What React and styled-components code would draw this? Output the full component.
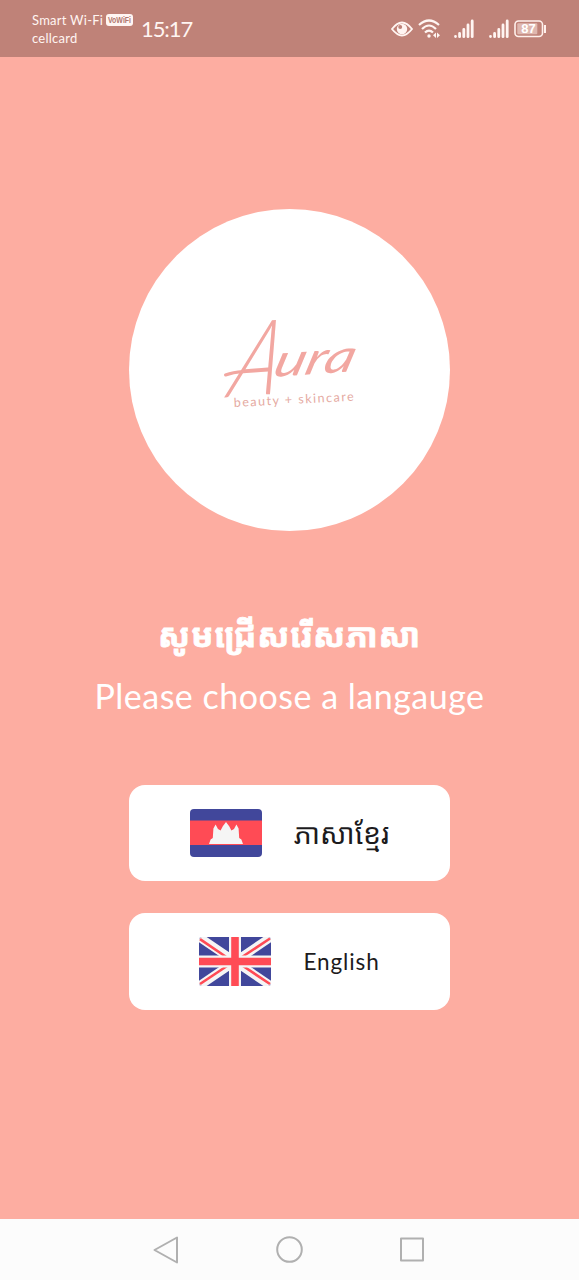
import React from "react";
import styled, { createGlobalStyle } from "styled-components";

const GlobalStyle = createGlobalStyle`
  * { box-sizing: border-box; }
  body { margin: 0; background: #fdada1; }
  button { font: inherit; border: 0; padding: 0; }
`;

const Screen = styled.div`
  width: 579px;
  height: 1280px;
  display: flex;
  flex-direction: column;
  background: #fdada1;
  font-family: Lato, "Noto Sans", "Noto Sans Khmer", "Khmer OS", sans-serif;
  overflow: hidden;
`;

const StatusBar = styled.header`
  height: 57px;
  flex: none;
  display: flex;
  align-items: center;
  padding: 0 32px;
  background: #bf8278;
  color: #fff5f2;
`;

const Carrier = styled.div`
  display: flex;
  flex-direction: column;
  width: 109px;
  font-size: 13px;
  line-height: 18px;
  padding-top: 1px;
  white-space: nowrap;
`;

const CarrierLine = styled.div`
  display: flex;
  align-items: center;
  gap: 3px;
  letter-spacing: ${(p) => p.$spacing || 0}px;
`;

const VoBadgeIcon = styled.svg`
  display: block;
  overflow: visible;
`;

const Clock = styled.div`
  font-size: 22px;
  line-height: 26px;
  letter-spacing: -1.1px;
  padding-top: 1px;
`;

const StatusIcons = styled.div`
  display: flex;
  align-items: center;
  margin-left: auto;
  svg { display: block; }
`;

const SignalGroup = styled.div`
  display: flex;
  gap: 15px;
  margin: 0 5px 0 13px;
`;

const Content = styled.main`
  flex: 1;
  display: flex;
  flex-direction: column;
  align-items: center;
  padding-top: 152px;
`;

const LogoDisc = styled.div`
  width: 321px;
  height: 322px;
  flex: none;
  border-radius: 50%;
  background: #fff;
  display: flex;
  align-items: center;
  justify-content: center;
`;

const KhmerTitle = styled.h1`
  margin: 75px 0 0;
  height: 56px;
  color: #fff;
  font-size: 33px;
  font-weight: 700;
  line-height: 56px;
  letter-spacing: 0.8px;
  -webkit-text-stroke: 0.8px #fff;
  white-space: nowrap;
`;

const Subtitle = styled.p`
  margin: 9px 0 0;
  height: 50px;
  color: #fff;
  font-size: 34px;
  line-height: 50px;
  letter-spacing: 0.5px;
  white-space: nowrap;
`;

const Choices = styled.div`
  display: flex;
  flex-direction: column;
  gap: 32px;
  margin-top: 64px;
`;

const ChoiceButton = styled.button`
  width: 321px;
  height: ${(p) => p.$height}px;
  display: flex;
  align-items: center;
  justify-content: center;
  gap: 32px;
  border-radius: 16px;
  background: #fff;
  color: #1c1b1d;
  svg { display: block; flex: none; }
`;

const ChoiceLabel = styled.span`
  font-size: ${(p) => p.$size}px;
  line-height: 36px;
  letter-spacing: ${(p) => p.$spacing || 0}px;
  white-space: nowrap;
`;

const NavBar = styled.nav`
  height: 61px;
  flex: none;
  display: flex;
  align-items: center;
  justify-content: center;
  gap: 95px;
  background: #fcfcfc;
  svg { display: block; }
`;

function Logo() {
  return (
    <svg width="220" height="200" viewBox="180 270 220 200" fill="#f2a7a1">
      <g transform="translate(228 393) rotate(-4) skewX(-19)" fontFamily="Lato, sans-serif" fontStyle="italic">
        <text x="-1" y="4" fontSize="104" fontWeight="300" textLength="48" lengthAdjust="spacingAndGlyphs">A</text>
        <text x="40" y="-13" fontSize="45" textLength="81" lengthAdjust="spacingAndGlyphs">ura</text>
      </g>
      <path d="M225.5 375Q233 372 243 371.4" fill="none" stroke="#f2a7a1" strokeWidth="3" strokeLinecap="round" />
      <text transform="translate(234 407) rotate(-3)" fontFamily="Lato, sans-serif" fontSize="12.5" fill="#e5aaa2" textLength="120">
        beauty + skincare
      </text>
    </svg>
  );
}

function VoBadge() {
  return (
    <VoBadgeIcon width="27" height="12" viewBox="0 0 27 12">
      <rect width="27" height="12" rx="3" fill="#fff5f2" />
      <text x="2" y="9.3" fill="#b0776e" fontFamily="Liberation Sans, sans-serif" fontSize="9.5" fontWeight="700" letterSpacing="0" textLength="23" lengthAdjust="spacingAndGlyphs">VoWiFi</text>
    </VoBadgeIcon>
  );
}

function EyeIcon() {
  return (
    <svg width="22" height="18" viewBox="0 0 22 18" fill="none">
      <path d="M1 9Q11-4 21 9Q11 22 1 9Z" stroke="#fff5f2" strokeWidth="1.8" />
      <circle cx="11" cy="9" r="5.2" fill="#fff5f2" />
      <circle cx="9.2" cy="7" r="2" fill="#bf8278" />
    </svg>
  );
}

function WifiIcon() {
  return (
    <svg width="28" height="20" viewBox="-5 0 28 20" fill="none" stroke="#fff5f2" strokeWidth="2.2">
      <path d="M1 6Q11-3 21 6M4 10Q11 3 18 10M7 13.5Q11 9.5 15 13.5" />
      <circle cx="11" cy="17" r="1.7" fill="#fff5f2" stroke="none" />
      <path d="M18 13.5l-3 2.7 3 2.7zM19 13.5l3 2.7-3 2.7z" fill="#fff5f2" stroke="none" />
    </svg>
  );
}

function SignalIcon() {
  return (
    <svg width="20" height="20" viewBox="0 0 20 20" stroke="#fff5f2" strokeWidth="2.8" strokeLinecap="round">
      <path d="M1.5 17.5v.1M5.6 14.5v3.2M9.8 10.5v7.2M14 6v11.7M18.2 2v15.7" />
    </svg>
  );
}

function BatteryIcon() {
  return (
    <svg width="33" height="20" viewBox="0 0 33 20">
      <rect x="1" y="2" width="27.5" height="15.5" rx="3.5" fill="none" stroke="#fff0ec" strokeWidth="1.6" />
      <rect x="3.3" y="4.2" width="20" height="11" rx="1" fill="#dfb7af" />
      <path d="M31 6v8" stroke="#fff0ec" strokeWidth="2" />
      <text x="14.5" y="14.4" fill="#fff" fontFamily="Liberation Sans, sans-serif" fontSize="13" fontWeight="700" textAnchor="middle">87</text>
    </svg>
  );
}

function CambodiaFlag() {
  return (
    <svg width="72" height="48" viewBox="0 0 72 48">
      <rect width="72" height="48" rx="4" fill="#41479b" />
      <path d="M0 11.5h72v24.5H0z" fill="#ff4b55" />
      <path d="M19 35l1.6-4.5 2.2-1.5.6-9.5 2.2-4 2.4 4.5 2.6 1.5 2.2-4.3L36 13l3.2 4.2 2.2 4.3L44 20l2.4-4.5 2.2 4 .6 9.5 2.2 1.5L53 35z" fill="#f5f5f5" />
    </svg>
  );
}

function BritainFlag() {
  return (
    <svg width="72" height="49" viewBox="0 0 72 49">
      <defs>
        <clipPath id="ukRound"><rect width="72" height="49" rx="3" /></clipPath>
      </defs>
      <g clipPath="url(#ukRound)" fill="none">
        <path fill="#41479b" d="M0 0h72v49H0z" />
        <path d="M0 0l72 49M72 0L0 49" stroke="#f5f5f5" strokeWidth="8.6" />
        <path d="M1 2.2L28 20.5M71 1.5L43 20M1 47L28 29M71 47L44 29" stroke="#ff4b55" strokeWidth="2.6" />
        <path d="M36 0v49M0 24.5h72" stroke="#f5f5f5" strokeWidth="12" />
        <path d="M36 0v49M0 24.5h72" stroke="#ff4b55" strokeWidth="7.6" />
      </g>
    </svg>
  );
}

export default function App() {
  return (
    <>
      <GlobalStyle />
      <Screen>
        <StatusBar>
          <Carrier>
            <CarrierLine $spacing={0.25}>Smart Wi-Fi <VoBadge /></CarrierLine>
            <CarrierLine $spacing={0.25}>cellcard</CarrierLine>
          </Carrier>
          <Clock>15:17</Clock>
          <StatusIcons>
            <EyeIcon />
            <WifiIcon />
            <SignalGroup>
              <SignalIcon />
              <SignalIcon />
            </SignalGroup>
            <BatteryIcon />
          </StatusIcons>
        </StatusBar>
        <Content>
          <LogoDisc><Logo /></LogoDisc>
          <KhmerTitle lang="km">សូមជ្រើសរើសភាសា</KhmerTitle>
          <Subtitle>Please choose a langauge</Subtitle>
          <Choices>
            <ChoiceButton $height={96}><CambodiaFlag /><ChoiceLabel $size={28.5} lang="km">ភាសាខ្មែរ</ChoiceLabel></ChoiceButton>
            <ChoiceButton $height={97}><BritainFlag /><ChoiceLabel $size={22.5} $spacing={0.9}>English</ChoiceLabel></ChoiceButton>
          </Choices>
        </Content>
        <NavBar>
          <svg width="28" height="28" viewBox="3 0.5 28 28" fill="none" stroke="#b0b0b0" strokeWidth="2" strokeLinejoin="round"><path d="M27 2v25L4.5 14.5z" /></svg>
          <svg width="28" height="28" viewBox="0.5 0.5 28 28" fill="none" stroke="#b0b0b0" strokeWidth="2"><circle cx="14" cy="14" r="12.3" /></svg>
          <svg width="28" height="28" viewBox="1 0.5 28 28" fill="none" stroke="#b0b0b0" strokeWidth="2" strokeLinejoin="round"><path d="M3 3h22v22H3z" /></svg>
        </NavBar>
      </Screen>
    </>
  );
}
